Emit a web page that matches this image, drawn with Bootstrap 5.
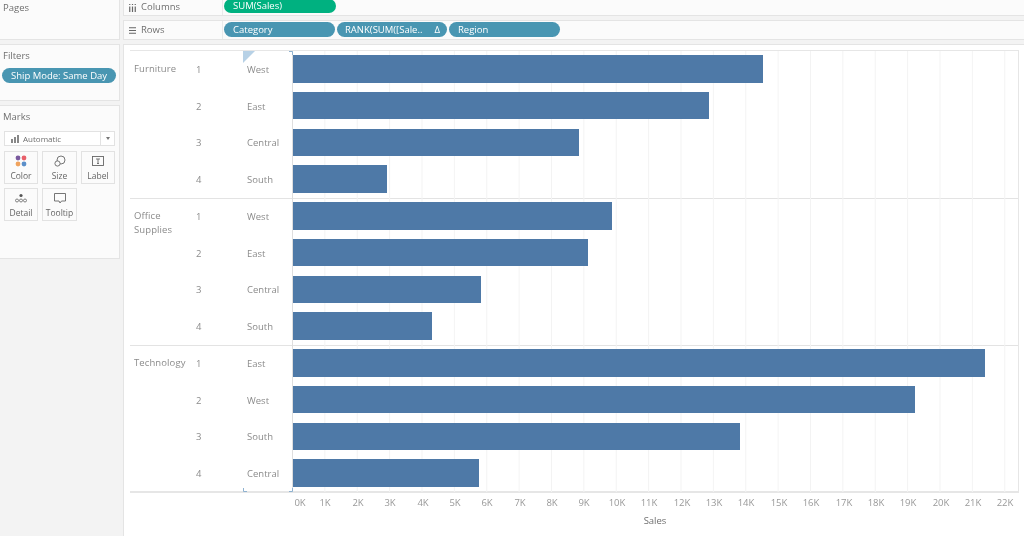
<!DOCTYPE html>
<html lang="en">
<head>
<meta charset="utf-8">
<title>Sales by Category</title>
<link href="https://cdn.jsdelivr.net/npm/bootstrap@5.3.0/dist/css/bootstrap.min.css" rel="stylesheet">
<style>
html,body{height:536px;overflow:hidden}
body{background:#f3f3f3;font-family:"Open Sans","Liberation Sans",sans-serif;font-size:9px;color:#6f6f6f}
.side{width:120px;flex:none;will-change:transform}
.pane{background:#fbfbfb;border:1px solid #e4e4e4;border-left:0;padding:0 3px}
.pane-title{font-size:9.5px;line-height:14px;color:#6f6f6f;padding-top:4px}
.pane-pages{height:40px;border-top:0;margin-bottom:4px}
.pane-pages .pane-title{padding-top:1px}
.pane-filters{height:57px;margin-bottom:4px}
.pane-filters .pane-title{padding-top:4px}
.pane-marks{height:154px}
.pane-marks .pane-title{padding-top:4px}
.pill{height:15px;border-radius:8px;color:#fff;font-size:9.5px;line-height:15px;padding-left:9px;white-space:nowrap;flex:none}
.pill-blue{background:#4996b2}
.pill-green{background:#00b180}
.pill-filter{width:114px;margin:5px 0 0 -1px;padding-left:9px}
.mark-select{height:15px;margin:7px 1px 0 1px;background:#fff;border:1px solid #e2e2e2;font-size:8px;line-height:13px}
.mark-select .sel-main{padding-left:6px;gap:3px}
.mark-select .sel-caret{width:14px;border-left:1px solid #e2e2e2}
.caret-down{width:0;height:0;border-left:2.5px solid transparent;border-right:2.5px solid transparent;border-top:3px solid #777}
.mark-grid{display:grid;grid-template-columns:34px 35px 34px;column-gap:4px;row-gap:4px;margin:5px 0 0 1px}
.mark-btn{height:33px;background:#fbfbfb;border:1px solid #e2e2e2;font-size:8.5px;line-height:11px;text-align:center;padding-top:3px;color:#666}
.mark-btn svg{display:block;margin:0 auto 3px}
.main-col{min-width:0;padding-left:3px;will-change:transform}
.shelf{background:#fbfbfb;border:1px solid #e4e4e4;border-right:0;display:flex}
.shelf-cols{height:16px;border-top:0;margin-bottom:4px}
.shelf-rows{height:20px;margin-bottom:4px}
.shelf-label{width:99px;flex:none;border-right:1px solid #eaeaea;font-size:9.5px;color:#6f6f6f;padding-left:5px;gap:5px}
.shelf-rows .shelf-label{padding-top:1px}
.shelf-pills{padding-left:1px;gap:2px}
.shelf-cols .pill{height:14px;line-height:13px;margin-top:-1px}
.shelf-rows .pill{margin-top:1px}
.canvas{background:#fff;border:1px solid #e4e4e4;border-right:0;border-bottom:0;height:492px;padding:5px 4px 0 6px}
.chart{position:relative;width:889px}
.rule-top{height:1px;background:#e6e6e6}
.group{height:147px;display:flex;box-shadow:0 1px 0 #e3e3e3;position:relative}
.group.last{box-shadow:none;border-bottom:2px solid #e6e6e6;height:148px}
.cat{width:66px;flex:none;padding:11px 0 0 4px;line-height:13.5px;font-size:9.5px;color:#8b8b8b;letter-spacing:.1px}
.rows{flex:1;min-width:0;margin-top:-.5px}
.rowline{height:36.75px;display:flex;align-items:center}
.rank{width:51px;flex:none;font-size:9.5px;color:#8b8b8b;padding-top:2px}
.region{width:45px;flex:none;font-size:9.5px;color:#8b8b8b;padding-top:2px}
.plot{flex:1;height:100%;display:flex;align-items:center;border-left:1px solid #dedede;border-right:1px solid #e6e6e6;background-image:linear-gradient(to right,#f3f3f3 1px,transparent 1px);background-size:32.38px 100%;background-position:-1px 0}
.bar{height:27.5px;background:#4e79a7;flex:none}
.axis{position:relative;height:21px;margin-left:163px;color:#989898;font-size:9.5px}
.tick{position:absolute;top:3px;transform:translateX(-50%);white-space:nowrap}
.axis-title{margin-left:163px;text-align:center;color:#6f6f6f;font-size:9.5px;width:724px}
.corner{position:absolute}
</style>
</head>
<body class="d-flex">
<aside class="side">
  <div class="pane pane-pages"><div class="pane-title">Pages</div></div>
  <div class="pane pane-filters">
    <div class="pane-title">Filters</div>
    <div class="pill pill-blue pill-filter">Ship Mode: Same Day</div>
  </div>
  <div class="pane pane-marks">
    <div class="pane-title">Marks</div>
    <div class="mark-select d-flex">
      <div class="sel-main flex-grow-1 d-flex align-items-center">
        <svg width="9" height="8" viewBox="0 0 9 8"><rect x="0" y="4" width="2" height="4" fill="#888"/><rect x="3" y="2" width="2" height="6" fill="#888"/><rect x="6" y="0" width="2" height="8" fill="#888"/></svg>
        <span>Automatic</span>
      </div>
      <div class="sel-caret d-flex align-items-center justify-content-center"><span class="caret-down"></span></div>
    </div>
    <div class="mark-grid">
      <div class="mark-btn">
        <svg width="12" height="12" viewBox="0 0 12 12"><circle cx="3" cy="3" r="2.4" fill="#7a5a9e"/><circle cx="9" cy="3" r="2.4" fill="#e8606a"/><circle cx="3" cy="9" r="2.4" fill="#f0a35e"/><circle cx="9" cy="9" r="2.4" fill="#5b8fc9"/></svg>
        Color
      </div>
      <div class="mark-btn">
        <svg width="12" height="12" viewBox="0 0 12 12" fill="none" stroke="#666" stroke-width=".9"><circle cx="7" cy="5" r="4"/><circle cx="3.5" cy="8.5" r="2.6" fill="#fbfbfb"/></svg>
        Size
      </div>
      <div class="mark-btn">
        <svg width="12" height="12" viewBox="0 0 12 12" fill="none" stroke="#666" stroke-width=".9"><rect x=".5" y="1.5" width="11" height="9"/><path d="M4 4h4M6 4v4.5M5 8.5h2"/></svg>
        Label
      </div>
      <div class="mark-btn">
        <svg width="12" height="12" viewBox="0 0 12 12" fill="none" stroke="#666" stroke-width=".8"><circle cx="6" cy="3.5" r="1.6" fill="#555" stroke="none"/><circle cx="2" cy="8.5" r="1.5"/><circle cx="6" cy="8.5" r="1.5"/><circle cx="10" cy="8.5" r="1.5"/></svg>
        Detail
      </div>
      <div class="mark-btn">
        <svg width="12" height="12" viewBox="0 0 12 12" fill="none" stroke="#666" stroke-width=".9"><path d="M.5 1.5h11v7.5H7.5L6 11 5 9H.5z"/></svg>
        Tooltip
      </div>
    </div>
  </div>
</aside>
<main class="main-col flex-grow-1">
  <div class="shelf shelf-cols">
    <div class="shelf-label d-flex align-items-center">
      <svg width="7" height="8" viewBox="0 0 7 8"><path d="M.75 0v1M.75 2.5V8M3.5 0v1M3.5 2.5V8M6.25 0v1M6.25 2.5V8" stroke="#666" stroke-width="1.2"/></svg>
      <span>Columns</span>
    </div>
    <div class="shelf-pills d-flex"><div class="pill pill-green" style="width:112px">SUM(Sales)</div></div>
  </div>
  <div class="shelf shelf-rows">
    <div class="shelf-label d-flex align-items-center">
      <svg width="7" height="7" viewBox="0 0 7 7"><path d="M0 .75h7M0 3.5h7M0 6.25h7" stroke="#666" stroke-width="1"/></svg>
      <span>Rows</span>
    </div>
    <div class="shelf-pills d-flex">
      <div class="pill pill-blue" style="width:111px">Category</div>
      <div class="pill pill-blue d-flex justify-content-between pill-rank" style="width:110px;padding-left:8px;padding-right:7px"><span>RANK(SUM([Sale..</span><span>&#916;</span></div>
      <div class="pill pill-blue" style="width:111px">Region</div>
    </div>
  </div>
  <div class="canvas">
    <div class="chart" id="chart">
      <div class="rule-top"></div>
      <div class="group">
        <div class="cat">Furniture</div>
        <div class="rows">
          <div class="rowline"><div class="rank">1</div><div class="region">West</div><div class="plot"><div class="bar" style="width:470px"></div></div></div>
          <div class="rowline"><div class="rank">2</div><div class="region">East</div><div class="plot"><div class="bar" style="width:416px"></div></div></div>
          <div class="rowline"><div class="rank">3</div><div class="region">Central</div><div class="plot"><div class="bar" style="width:286px"></div></div></div>
          <div class="rowline"><div class="rank">4</div><div class="region">South</div><div class="plot"><div class="bar" style="width:94px"></div></div></div>
        </div>
      </div>
      <div class="group">
        <div class="cat">Office<br>Supplies</div>
        <div class="rows">
          <div class="rowline"><div class="rank">1</div><div class="region">West</div><div class="plot"><div class="bar" style="width:319px"></div></div></div>
          <div class="rowline"><div class="rank">2</div><div class="region">East</div><div class="plot"><div class="bar" style="width:295px"></div></div></div>
          <div class="rowline"><div class="rank">3</div><div class="region">Central</div><div class="plot"><div class="bar" style="width:188px"></div></div></div>
          <div class="rowline"><div class="rank">4</div><div class="region">South</div><div class="plot"><div class="bar" style="width:139px"></div></div></div>
        </div>
      </div>
      <div class="group last">
        <div class="cat">Technology</div>
        <div class="rows">
          <div class="rowline"><div class="rank">1</div><div class="region">East</div><div class="plot"><div class="bar" style="width:692px"></div></div></div>
          <div class="rowline"><div class="rank">2</div><div class="region">West</div><div class="plot"><div class="bar" style="width:622px"></div></div></div>
          <div class="rowline"><div class="rank">3</div><div class="region">South</div><div class="plot"><div class="bar" style="width:447px"></div></div></div>
          <div class="rowline"><div class="rank">4</div><div class="region">Central</div><div class="plot"><div class="bar" style="width:186px"></div></div></div>
        </div>
      </div>
      <div class="axis" id="axis">
        <span class="tick" style="left:7px">0K</span><span class="tick" style="left:32px">1K</span><span class="tick" style="left:65px">2K</span><span class="tick" style="left:97px">3K</span><span class="tick" style="left:130px">4K</span><span class="tick" style="left:162px">5K</span><span class="tick" style="left:194px">6K</span><span class="tick" style="left:227px">7K</span><span class="tick" style="left:259px">8K</span><span class="tick" style="left:291px">9K</span><span class="tick" style="left:324px">10K</span><span class="tick" style="left:356px">11K</span><span class="tick" style="left:389px">12K</span><span class="tick" style="left:421px">13K</span><span class="tick" style="left:453px">14K</span><span class="tick" style="left:486px">15K</span><span class="tick" style="left:518px">16K</span><span class="tick" style="left:551px">17K</span><span class="tick" style="left:583px">18K</span><span class="tick" style="left:615px">19K</span><span class="tick" style="left:648px">20K</span><span class="tick" style="left:680px">21K</span><span class="tick" style="left:712px">22K</span>
      </div>
      <div class="axis-title">Sales</div>
      <svg class="corner" style="left:113px;top:1px" width="12" height="12" viewBox="0 0 12 12"><path d="M0 0h12L0 12z" fill="#b7d1e6"/></svg>
      <svg class="corner" style="left:159px;top:1px" width="4" height="4" viewBox="0 0 4 4"><path d="M0 .5h3.5V4" fill="none" stroke="#8fb2d0"/></svg>
      <svg class="corner" style="left:113px;top:438px" width="4" height="4" viewBox="0 0 4 4"><path d="M.5 0v3.5H4" fill="none" stroke="#8fb2d0"/></svg>
      <svg class="corner" style="left:159px;top:438px" width="4" height="4" viewBox="0 0 4 4"><path d="M0 3.5h3.5V0" fill="none" stroke="#8fb2d0"/></svg>
    </div>
  </div>
</main>
<script src="https://cdn.jsdelivr.net/npm/bootstrap@5.3.0/dist/js/bootstrap.bundle.min.js"></script>
</body>
</html>
